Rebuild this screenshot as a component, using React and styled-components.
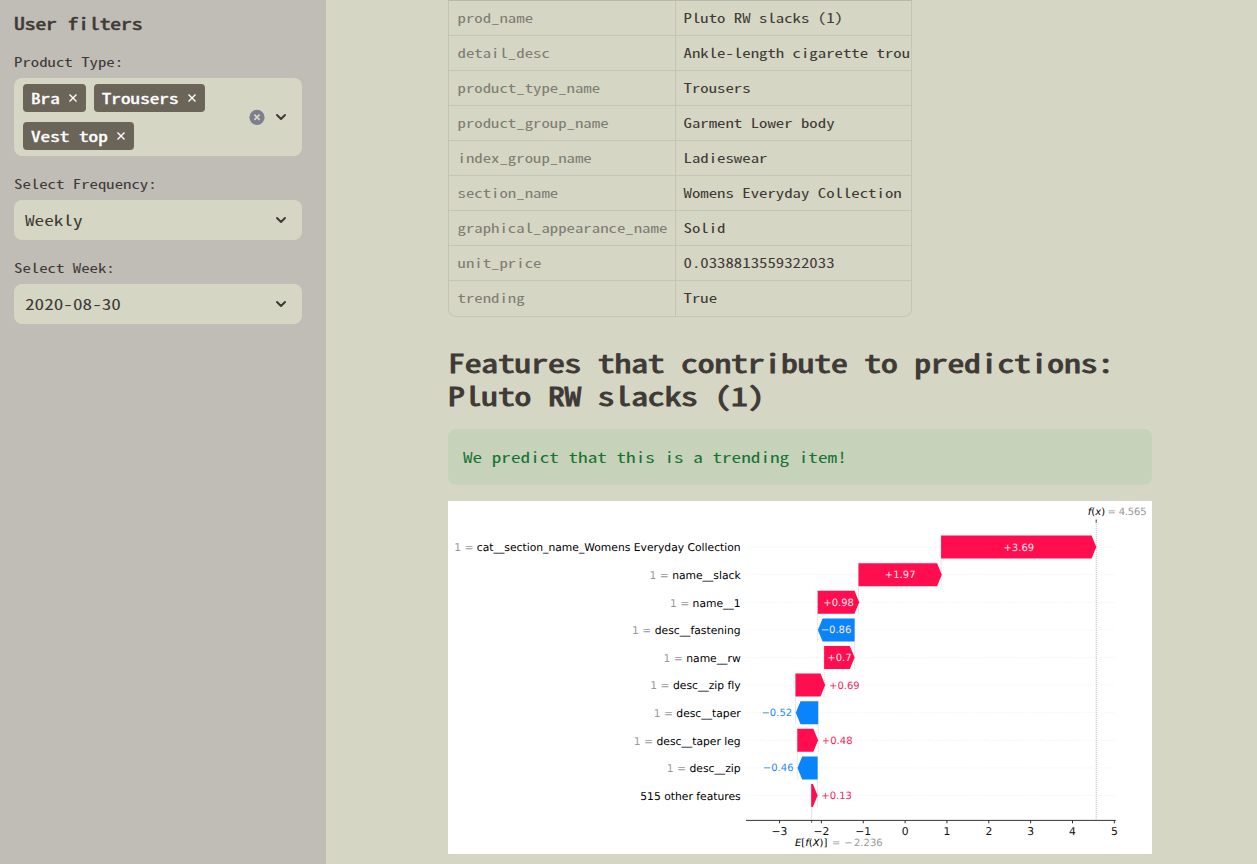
import React from "react";
import styled, { createGlobalStyle } from "styled-components";

const Global = createGlobalStyle`
  *, *::before, *::after { box-sizing: border-box; }
  html, body { margin: 0; padding: 0; height: 100%; overflow: hidden; }
  body {
    background: #d5d6c4;
    color: #3f3a37;
    font-family: "Noto Sans Mono CJK SC", "Noto Sans Mono CJK JP", "DejaVu Sans Mono", monospace;
    font-feature-settings: "liga" 0;
  }
`;

const Page = styled.div`
  display: flex;
  width: 100%;
  height: 864px;
  overflow: hidden;
`;

/* The mono face is tall and narrow; flatten it to a wider set. */
const Mono = styled.span`
  display: inline-block;
  vertical-align: top;
  white-space: pre;
  transform: scaleY(0.775);
`;

const Sidebar = styled.aside`
  flex: 0 0 326px;
  padding: 12px 24px 0 14px;
  background: #c0bcb6;
`;

const SidebarTitle = styled.h2`
  margin: 0 0 18px;
  font-size: 21.6px;
  line-height: 22px;
  font-weight: 400;
  -webkit-text-stroke: 0.7px currentColor;
  letter-spacing: -0.09px;
`;

const Field = styled.div`
  display: flex;
  flex-direction: column;
  margin-bottom: 18px;
`;

const Label = styled.label`
  height: 26px;
  font-size: 16.8px;
  line-height: 20px;
`;

const Control = styled.div`
  display: flex;
  align-items: center;
  min-height: 40px;
  padding: 0 14px 0 ${(p) => (p.$multi ? "9px" : "11px")};
  border-radius: 8px;
  background: #d5d6c4;
  font-size: 19.2px;
  line-height: 24px;
`;

const Value = styled.span`
  flex: 1;
`;

const Tags = styled.div`
  flex: 1;
  display: flex;
  flex-wrap: wrap;
  gap: 10px 8px;
  padding: 6px 0;
`;

const Tag = styled.span`
  display: flex;
  align-items: center;
  gap: 9px;
  height: 28px;
  padding: 0 9px 0 8px;
  border-radius: 4px;
  background: #6b6459;
  color: #fff;
  -webkit-text-stroke: 0.5px currentColor;
`;

const Icon = styled.svg`
  display: block;
  flex: none;
  margin-right: ${(p) => p.$gap || 0}px;
`;

const Main = styled.main`
  flex: 1;
  padding: 0 105px 0 122px;
`;

const Table = styled.div`
  width: 464px;
  height: 317px;
  border: 1px solid #c5c5b6;
  border-top-color: #b9b9ab;
  border-radius: 0 0 8px 8px;
  overflow: hidden;
`;

const Row = styled.div`
  display: grid;
  grid-template-columns: 227px 1fr;
  height: 35px;
  font-size: 16.8px;
  line-height: 34px;
  border-bottom: 1px solid #c5c5b6;
  &:last-child { border-bottom: 0; }
`;

const Cell = styled.span`
  overflow: hidden;
  white-space: nowrap;
  padding-left: ${(p) => (p.$index ? "8.5px" : "7.5px")};
  color: ${(p) => (p.$index ? "#7f7d73" : "#3f3a37")};
  border-right: ${(p) => (p.$index ? "1px solid #c5c5b6" : "0")};
`;

const Heading = styled.h2`
  height: 66px;
  margin: 29px 0 17px;
  font-size: 33.6px;
  font-weight: 400;
  -webkit-text-stroke: 1.2px currentColor;
  letter-spacing: -0.14px;
`;

/* Line height is given before flattening: 43.4px becomes 33px. */
const HeadingText = styled(Mono)`
  line-height: 43.4px;
  transform: scaleY(0.76);
  transform-origin: 0 0;
`;

const Alert = styled.div`
  height: 56px;
  margin-bottom: 16px;
  padding: 16px 15px;
  border-radius: 8px;
  background: #c6d2b9;
  color: #177233;
  font-size: 19.2px;
  line-height: 24px;
`;

const Plot = styled.svg`
  display: block;
  background: #fff;
  font-family: "DejaVu Sans", sans-serif;
  text-rendering: geometricPrecision;
`;

const Chevron = () => (
  <Icon width="14" height="14" viewBox="0 0 14 14">
    <path d="M3 5 L7 9 L11 5" fill="none" stroke="#3f3a37" strokeWidth="2" strokeLinecap="round" strokeLinejoin="round" />
  </Icon>
);

const Cross = () => (
  <Icon width="8" height="8" viewBox="0 0 8 8">
    <path d="M0.5 0.5 L7.5 7.5 M7.5 0.5 L0.5 7.5" stroke="#fff" strokeWidth="1.4" />
  </Icon>
);

const ClearIcon = () => (
  <Icon $gap={9} width="16" height="16" viewBox="0 0 16 16">
    <circle cx="8" cy="8.3" r="7.6" fill="#7e7f8e" />
    <path d="M5.4 5.7 L10.6 10.9 M10.6 5.7 L5.4 10.9" stroke="#d5d6c4" strokeWidth="1.7" />
  </Icon>
);

const product = [
  ["prod_name", "Pluto RW slacks (1)"],
  ["detail_desc", "Ankle-length cigarette trou"],
  ["product_type_name", "Trousers"],
  ["product_group_name", "Garment Lower body"],
  ["index_group_name", "Ladieswear"],
  ["section_name", "Womens Everyday Collection"],
  ["graphical_appearance_name", "Solid"],
  ["unit_price", "0.0338813559322033"],
  ["trending", "True"],
];

const RED = "#ff0d4e";
const BLUE = "#0a84fa";

/* name, left edge, right edge, value, centre of the value text */
const features = [
  ["cat__section_name_Womens Everyday Collection", 493.1, 648.3, "+3.69", 570.8],
  ["name__slack", 410.5, 493.8, "+1.97", 452.2],
  ["name__1", 369.7, 411.2, "+0.98", 390.6],
  ["desc__fastening", 369.9, 406.6, "−0.86", 388],
  ["name__rw", 376.1, 406.6, "+0.7", 391.4],
  ["desc__zip fly", 347.5, 377.2, "+0.69", 396.4],
  ["desc__taper", 347.8, 370.2, "−0.52", 328.8],
  ["desc__taper leg", 349.3, 370.1, "+0.48", 389.2],
  ["desc__zip", 349.5, 369.6, "−0.46", 330.2],
  ["515 other features", 363.2, 369.6, "+0.13", 388.6],
];

const HALF = 11.5;
const rowY = (i) => 46.1 + i * 27.6;

function Arrow({ x1, x2, y, negative }) {
  const head = Math.min(4.7, x2 - x1);
  const d = negative
    ? `M${x2} ${y - HALF} L${x1 + head} ${y - HALF} L${x1} ${y} L${x1 + head} ${y + HALF} L${x2} ${y + HALF} Z`
    : `M${x1} ${y - HALF} L${x2 - head} ${y - HALF} L${x2} ${y} L${x2 - head} ${y + HALF} L${x1} ${y + HALF} Z`;
  return <path d={d} fill={negative ? BLUE : RED} />;
}

function Waterfall() {
  return (
    <Plot width="704" height="353" viewBox="0 0 704 353">
      {features.map((f, i) => (
        <line key={f[0]} x1="298" x2="667.5" y1={rowY(i)} y2={rowY(i)} stroke="#e6e6e6" strokeWidth="0.7" strokeDasharray="1 1.8" />
      ))}
      <line x1="648.2" x2="648.2" y1="19" y2="319" stroke="#b5b5b5" strokeWidth="0.8" strokeDasharray="1.2 0.8" />
      <line x1="648.2" x2="648.2" y1="18.5" y2="21.5" stroke="#333" strokeWidth="0.9" />
      {features.slice(0, 9).map((f, i) => {
        const x = f[3][0] === "−" ? f[2] : f[1];
        return <line key={f[0]} x1={x} x2={x} y1={rowY(i) - HALF} y2={rowY(i + 1) + HALF} stroke="#bbb" strokeWidth="0.7" strokeDasharray="1 1" />;
      })}
      <line x1="363.6" x2="363.6" y1={rowY(9)} y2="319" stroke="#bbb" strokeWidth="0.7" strokeDasharray="1 1" />
      {features.map(([name, x1, x2, value, cx], i) => {
        const negative = value[0] === "−";
        const inside = i < 5;
        return (
          <g key={name}>
            <Arrow x1={x1} x2={x2} y={rowY(i)} negative={negative} />
            <text x={cx} y={rowY(i) + 3.4} textAnchor="middle" fontSize="10" fill={inside ? "#ffe6ec" : negative ? "#1f8cf2" : "#f61f58"}>
              {value}
            </text>
            <text x="292.7" y={rowY(i) + 4.3} textAnchor="end" fontSize="10.75" fill="#000">
              {i < 9 && <tspan fill="#999">1 = </tspan>}
              {name}
            </text>
          </g>
        );
      })}
      <line x1="298" x2="667.7" y1="319.4" y2="319.4" stroke="#333" strokeWidth="1" />
      {[-3, -2, -1, 0, 1, 2, 3, 4, 5].map((n) => (
        <g key={n}>
          <line x1={457.1 + n * 41.85} x2={457.1 + n * 41.85} y1="319" y2="322.3" stroke="#333" strokeWidth="1" />
          <text x={457.1 + n * 41.85} y="334" textAnchor="middle" fontSize="10.75" fill="#111">
            {n < 0 ? `−${-n}` : n}
          </text>
        </g>
      ))}
      <line x1="363.6" x2="363.6" y1="319" y2="321.8" stroke="#333" strokeWidth="0.8" />
      <text x="639.8" y="13.6" fontSize="10" fontStyle="italic" fill="#000">
        f<tspan fontStyle="normal">(</tspan>x<tspan fontStyle="normal">)</tspan>
      </text>
      <text x="659.5" y="13.6" fontSize="10" fill="#999" textLength="39" lengthAdjust="spacing">= 4.565</text>
      <text x="347" y="345" fontSize="10" fontStyle="italic" fill="#000">
        E<tspan fontStyle="normal">[</tspan>f<tspan fontStyle="normal">(</tspan>X<tspan fontStyle="normal">)]</tspan>
      </text>
      <text x="384" y="345" fontSize="10" fill="#999">=</text>
      <text x="396.2" y="345" fontSize="10" fill="#999">−</text>
      <text x="406" y="345" fontSize="10" fill="#999">2.236</text>
    </Plot>
  );
}

export default function App() {
  return (
    <Page>
      <Global />
      <Sidebar>
        <SidebarTitle><Mono>User filters</Mono></SidebarTitle>
        <Field>
          <Label><Mono>Product Type:</Mono></Label>
          <Control $multi>
            <Tags>
              {["Bra", "Trousers", "Vest top"].map((t) => (
                <Tag key={t}><Mono>{t}</Mono><Cross /></Tag>
              ))}
            </Tags>
            <ClearIcon />
            <Chevron />
          </Control>
        </Field>
        <Field>
          <Label><Mono>Select Frequency:</Mono></Label>
          <Control><Value><Mono>Weekly</Mono></Value><Chevron /></Control>
        </Field>
        <Field>
          <Label><Mono>Select Week:</Mono></Label>
          <Control><Value><Mono>2020-08-30</Mono></Value><Chevron /></Control>
        </Field>
      </Sidebar>
      <Main>
        <Table>
          {product.map(([k, v]) => (
            <Row key={k}>
              <Cell $index><Mono>{k}</Mono></Cell>
              <Cell><Mono>{v}</Mono></Cell>
            </Row>
          ))}
        </Table>
        <Heading>
          <HeadingText>{"Features that contribute to predictions:\nPluto RW slacks (1)"}</HeadingText>
        </Heading>
        <Alert><Mono>We predict that this is a trending item!</Mono></Alert>
        <Waterfall />
      </Main>
    </Page>
  );
}
